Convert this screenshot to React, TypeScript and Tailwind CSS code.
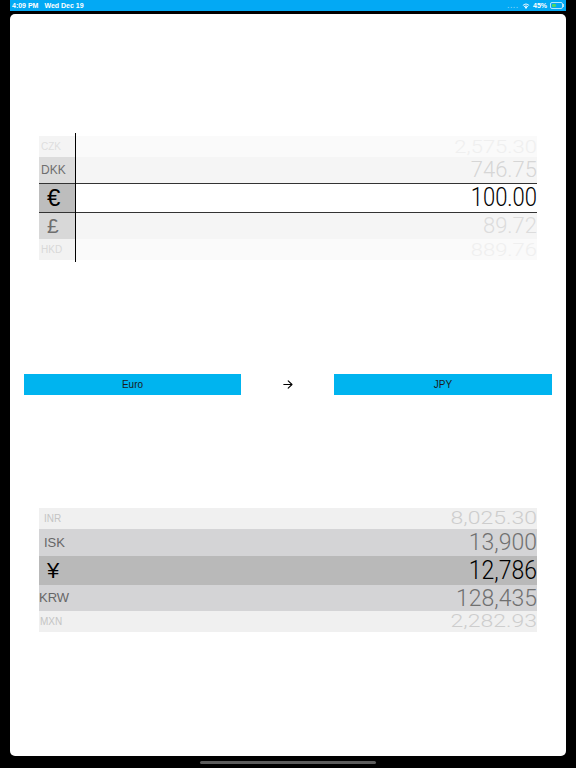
import React from 'react';

type Row = {
  label: string;
  value: string;
  h: string;
  labelBg: string;
  valueBg: string;
  labelCls: string;
  valueCls: string;
  squash: string;
};

const topRows: Row[] = [
  { label: 'CZK', value: '2,575.30', h: 'h-[21px]', labelBg: 'bg-[#f4f4f4]', valueBg: 'bg-[#fafafa]', labelCls: 'pl-[2px] text-[10px] text-[#dedede]', valueCls: 'text-[22px] text-[#efefef]', squash: 'scale-y-[0.83]' },
  { label: 'DKK', value: '746.75', h: 'h-[26px]', labelBg: 'bg-[#dcdcdc]', valueBg: 'bg-[#f5f5f5]', labelCls: 'pl-[2px] text-[12px] text-[#6e6e6e]', valueCls: 'text-[22px] text-[#d6d6d6]', squash: 'scale-y-[0.97]' },
  { label: '€', value: '100.00', h: 'h-[30px]', labelBg: 'bg-[#bdbdbd]', valueBg: 'bg-white', labelCls: 'pl-[8px] text-[24px] text-black', valueCls: 'text-[22px] text-black', squash: 'scale-y-[1.2]' },
  { label: '£', value: '89.72', h: 'h-[26px]', labelBg: 'bg-[#d8d8d8]', valueBg: 'bg-[#f5f5f5]', labelCls: 'pl-[8px] text-[21px] text-[#6e6e6e]', valueCls: 'text-[22px] text-[#dcdcdc]', squash: 'scale-y-[0.97]' },
  { label: 'HKD', value: '889.76', h: 'h-[21px]', labelBg: 'bg-[#f2f2f2]', valueBg: 'bg-[#fafafa]', labelCls: 'pl-[2px] text-[10px] text-[#d8d8d8]', valueCls: 'text-[22px] text-[#efefef]', squash: 'scale-y-[0.83]' },
];

const bottomRows: Row[] = [
  { label: 'INR', value: '8,025.30', h: 'h-[21px]', labelBg: '', valueBg: 'bg-[#f0f0f0]', labelCls: 'pl-[5px] text-[10px] text-[#c4c4c4]', valueCls: 'text-[23px] text-[#cdcdcd]', squash: 'scale-y-[0.8]' },
  { label: 'ISK', value: '13,900', h: 'h-[27px]', labelBg: '', valueBg: 'bg-[#d4d4d6]', labelCls: 'pl-[5px] text-[13px] text-[#666]', valueCls: 'text-[23px] text-[#707070]', squash: 'scale-y-[1.03]' },
  { label: '¥', value: '12,786', h: 'h-[29px]', labelBg: '', valueBg: 'bg-[#b9b9b9]', labelCls: 'pl-[8px] text-[22px] text-black', valueCls: 'text-[23px] text-black', squash: 'scale-y-[1.15]' },
  { label: 'KRW', value: '128,435', h: 'h-[26px]', labelBg: '', valueBg: 'bg-[#d4d4d6]', labelCls: 'pl-0 text-[13px] text-[#666]', valueCls: 'text-[23px] text-[#707070]', squash: 'scale-y-[1.03]' },
  { label: 'MXN', value: '2,282.93', h: 'h-[21px]', labelBg: '', valueBg: 'bg-[#f0f0f0]', labelCls: 'pl-[1px] text-[10px] text-[#c4c4c4]', valueCls: 'text-[23px] text-[#cdcdcd]', squash: 'scale-y-[0.8]' },
];

const font = { fontFamily: '"Liberation Sans", Arial, sans-serif' };
const numFont = { fontFamily: 'Roboto, "Liberation Sans", sans-serif' };

const TopPicker: React.FC = () => (
  <div className="relative ml-[29px] w-[498px] pt-[3px] pb-[2px]">
    {topRows.map((r) => (
      <div
        key={r.label}
        className={`flex ${r.h} ${r.label === '€' ? 'border-y border-[#333]' : ''}`}
      >
        <div className={`w-[36px] shrink-0 flex items-center ${r.labelBg} ${r.labelCls}`}>{r.label}</div>
        <div className={`flex-1 flex items-center justify-end font-light ${r.valueBg} ${r.valueCls}`} style={numFont}>
          <span className={`${r.squash} leading-none`}>{r.value}</span>
        </div>
      </div>
    ))}
    {/* divider between symbol column and values */}
    <div className="absolute left-[36px] top-0 bottom-0 w-px bg-black" />
  </div>
);

const BottomPicker: React.FC = () => (
  <div className="ml-[29px] w-[498px]">
    {bottomRows.map((r) => (
      <div key={r.label} className={`flex items-center justify-between ${r.h} ${r.valueBg}`}>
        <div className={`flex items-center ${r.labelCls}`}>{r.label}</div>
        <div className={`font-light leading-none ${r.valueCls}`} style={numFont}>
          <span className={`inline-block ${r.squash} leading-none`}>{r.value}</span>
        </div>
      </div>
    ))}
  </div>
);

const StatusBar: React.FC = () => (
  <div className="mx-[10px] h-[11px] bg-[#03a9f4] flex items-center justify-between px-[2px] text-white text-[7px] font-bold leading-none">
    <div className="flex gap-[6px]">
      <span>4:09 PM</span>
      <span>Wed Dec 19</span>
    </div>
    <div className="flex items-center gap-[3px]">
      <span className="text-[#7fd0f7] tracking-[1px]">....</span>
      <svg width="8" height="6" viewBox="0 0 16 12" fill="white">
        <path d="M8 12 L5.5 9 A3.5 3.5 0 0 1 10.5 9 Z" />
        <path d="M3.6 6.9 A6.5 6.5 0 0 1 12.4 6.9 L11.2 8.2 A4.8 4.8 0 0 0 4.8 8.2 Z" />
        <path d="M1.2 4.3 A10 10 0 0 1 14.8 4.3 L13.6 5.6 A8.2 8.2 0 0 0 2.4 5.6 Z" />
      </svg>
      <span>45%</span>
      <div className="flex items-center">
        <div className="w-[13px] h-[7px] rounded-[2px] border border-white/70 p-[1px] flex">
          <div className="w-[45%] h-full bg-[#4cd964] rounded-[1px]" />
        </div>
        <div className="w-px h-[3px] bg-white/70" />
      </div>
    </div>
  </div>
);

export default function App() {
  return (
    <div className="w-[576px] h-[768px] bg-black flex flex-col overflow-hidden" style={font}>
      <StatusBar />
      <div className="mt-[3px] mx-[10px] h-[742px] bg-white rounded-[5px] flex flex-col">
        <div className="mt-[119px]">
          <TopPicker />
        </div>
        <div className="mt-[112px] px-[14px] flex items-center justify-between">
          <button type="button" className="w-[217px] h-[21px] bg-[#00b4ef] text-[10px] text-[#1b1b1b] flex items-center justify-center">
            Euro
          </button>
          <svg width="10" height="9" viewBox="0 0 10 9" fill="none" stroke="black" strokeWidth="1.1" strokeLinecap="round" strokeLinejoin="round">
            <path d="M0.8 4.5 H9 M5.2 0.8 L9 4.5 L5.2 8.2" />
          </svg>
          <button type="button" className="w-[218px] h-[21px] bg-[#00b4ef] text-[10px] text-[#1b1b1b] flex items-center justify-center">
            JPY
          </button>
        </div>
        <div className="mt-[113px]">
          <BottomPicker />
        </div>
      </div>
      <div className="flex-1 flex items-center justify-center">
        <div className="w-[176px] h-[3px] rounded-full bg-[#5c5c5c]" />
      </div>
    </div>
  );
}
